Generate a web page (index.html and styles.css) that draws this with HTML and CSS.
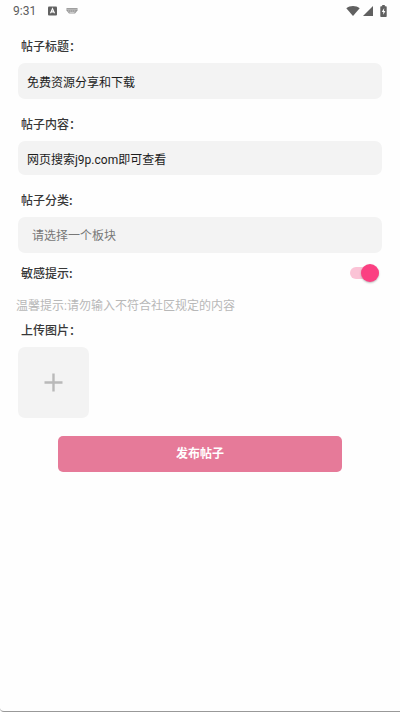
FILE: index.html
```html
<!DOCTYPE html>
<html lang="zh-CN">
<head>
<meta charset="utf-8">
<meta name="viewport" content="width=device-width, initial-scale=1">
<title>发布帖子</title>
<link rel="stylesheet" href="styles.css">
</head>
<body>
<header class="status">
  <span class="status-time">9:31</span>
  <svg class="status-app" width="9" height="10" viewBox="0 0 9 10" aria-hidden="true">
    <rect width="9" height="9" y=".5" rx="1" fill="#626262"/>
    <path d="M2.5 7.3 4.5 2.7 6.5 7.3M3.2 5.9h2.6" fill="none" stroke="#fff" stroke-width="1.1"/>
  </svg>
  <svg class="status-keyboard" width="12" height="8" viewBox="0 0 12 8" aria-hidden="true">
    <path d="M.5 1h11v2.5L9 6.500H3L.5 3.500z" fill="#989898"/>
    <path d="M1.500 2.300h9M2.300 4h7.500" stroke="#f4f4f4" stroke-width=".8" stroke-dasharray="1 1"/>
    <path d="M3.500 5.600h5" stroke="#e8e8e8" stroke-width=".7"/>
  </svg>
  <span class="status-right">
    <svg width="14" height="12" viewBox="0 0 14 12" aria-hidden="true"><path d="M7 11 .3 3.200C4 .1 10 .1 13.700 3.200z" fill="#606060"/></svg>
    <svg width="10" height="12" viewBox="0 0 10 12" aria-hidden="true"><path d="M10 1v10H0z" fill="#606060"/></svg>
    <svg class="status-battery" width="7" height="12" viewBox="0 0 7 12" aria-hidden="true"><path d="M2.200 0h2.600v1.200H6q.7 0 .7.700v9.300q0 .8-.7.800H1q-.7 0-.7-.8V1.900q0-.7.700-.7h1.200z" fill="#606060"/><path d="M4.200 3 1.800 7h1.500v2.800L5.400 5.900H4z" fill="#fff"/></svg>
  </span>
</header>
<form class="form">
  <label class="label" for="title">帖子标题：</label>
  <input class="field" id="title" type="text" value="免费资源分享和下载">
  <label class="label" for="content">帖子内容：</label>
  <input class="field field-short" id="content" type="text" value="网页搜索j9p.com即可查看">
  <label class="label" for="category">帖子分类:</label>
  <select class="field field-select" id="category">
    <option>请选择一个板块</option>
  </select>
  <div class="switch-row">
    <label class="label" for="sensitive">敏感提示:</label>
    <input class="switch" id="sensitive" type="checkbox" role="switch" checked>
  </div>
  <p class="hint">温馨提示:请勿输入不符合社区规定的内容</p>
  <span class="label label-upload" id="upload-label">上传图片：</span>
  <button class="upload" type="button" aria-labelledby="upload-label">
    <svg width="19" height="19" viewBox="0 0 19 19" aria-hidden="true"><path d="M9.500 .5v18M.5 9.500h18" stroke="#b9b9b9" stroke-width="2.400"/></svg>
  </button>
  <button class="submit" type="submit">发布帖子</button>
</form>
</body>
</html>
```
FILE: styles.css
```css
* {
  box-sizing: border-box;
}

html {
  background: #fefefe;
}

body {
  display: flex;
  flex-direction: column;
  min-height: 100vh;
  margin: 0;
  border-bottom: 1px solid #999;
  border-bottom-left-radius: 4px;
  background: #fefefe;
  color: #383838;
  font: 12px/20px Roboto, "Noto Sans CJK SC", sans-serif;
}

input,
select,
button {
  margin: 0;
  border: 0;
  font: inherit;
}

.status {
  display: flex;
  align-items: center;
  height: 22px;
  padding: 0 13px;
  color: #5c5c5c;
}

.status-app {
  margin-left: 12px;
}

.status-keyboard {
  margin-left: 9px;
}

.status-right {
  display: flex;
  align-items: center;
  gap: 3px;
  margin-left: auto;
}

.status-battery {
  margin-left: 4px;
}

.form {
  display: flex;
  flex-direction: column;
  padding: 14px 18px;
}

.label {
  margin: 0 3px 7px;
  font-family: "Noto Sans CJK SC", sans-serif;
  font-weight: 500;
}

.field {
  width: 100%;
  height: 36px;
  margin-bottom: 15px;
  padding: 0 9px;
  border-radius: 7px;
  background: #f3f3f3;
  color: #1c1c1c;
}

.field-short {
  height: 34px;
}

.field-select {
  margin-bottom: 10px;
  padding: 2px 14px 0;
  appearance: none;
  color: #777;
}

.switch-row {
  display: flex;
  align-items: center;
  justify-content: space-between;
  margin-bottom: 13px;
}

.switch-row .label {
  margin-bottom: 0;
}

.switch {
  display: flex;
  align-items: center;
  justify-content: flex-end;
  width: 29px;
  height: 12px;
  margin-right: 3px;
  border-radius: 6px;
  appearance: none;
  background: #fbc3d6;
}

.switch::before {
  content: "";
  flex: none;
  width: 18px;
  height: 18px;
  border-radius: 50%;
  background: #fb4082;
  box-shadow: 0 1px 2px #0004;
}

.switch:not(:checked) {
  justify-content: flex-start;
}

.hint {
  margin: 0 -2px 4px;
  color: #b8b8b8;
}

.upload {
  display: flex;
  align-items: center;
  justify-content: center;
  width: 71px;
  height: 71px;
  margin-bottom: 18px;
  padding: 0;
  border-radius: 7px;
  background: #f3f3f3;
}

.submit {
  height: 36px;
  margin: 0 40px;
  border-radius: 5px;
  background: #e67a99;
  color: #fff;
  font-weight: 700;
}
```
